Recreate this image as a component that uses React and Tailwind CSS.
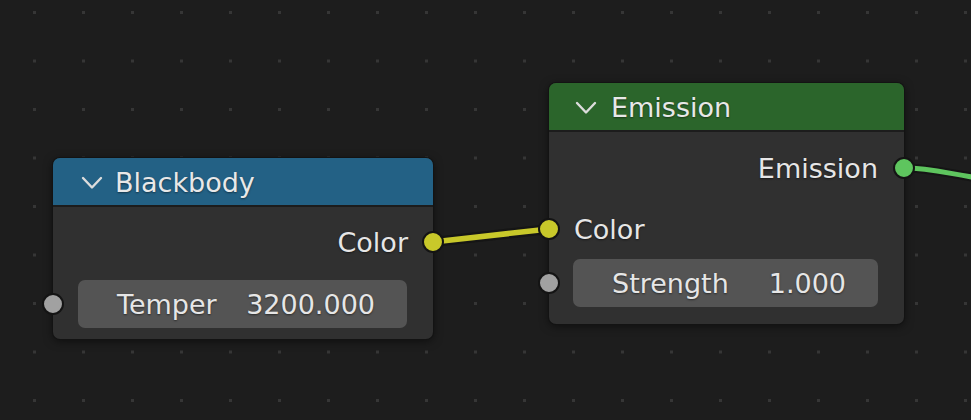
import React from "react";

const font = { fontFamily: '"DejaVu Sans", "Liberation Sans", sans-serif' };

function Chevron() {
  return (
    <svg width="22" height="14" viewBox="0 0 22 14" className="shrink-0">
      <polyline points="2,2 11,11.5 20,2" fill="none" stroke="#dcdcdc" strokeWidth="2.4" strokeLinecap="round" strokeLinejoin="round" />
    </svg>
  );
}

function Socket({ color, side }) {
  const pos = side === "left" ? "left-[-11px]" : "right-[-11px]";
  return (
    <div
      className={`absolute ${pos} top-1/2 -translate-y-1/2 w-[22px] h-[22px] rounded-full border-2 border-[#141414] z-10`}
      style={{ backgroundColor: color }}
    />
  );
}

function Field({ label, value }) {
  return (
    <div className="h-[48px] w-full rounded-[7px] bg-[#545454] flex items-center justify-between pl-[39px] pr-[32px] text-[#e6e6e6] [text-shadow:0_1px_2px_rgba(0,0,0,0.5)]">
      <span>{label}</span>
      <span>{value}</span>
    </div>
  );
}

export default function App() {
  return (
    <div
      className="relative w-[971px] h-[420px] overflow-hidden bg-[#1d1d1d] bg-[radial-gradient(circle,#363636_1.6px,transparent_1.9px)] bg-[length:49px_48.5px] bg-[position:10px_-11.75px] text-[27px] leading-none"
      style={font}
    >
      <svg className="absolute inset-0" width="971" height="420">
        <path d="M433 242 L 549 229" fill="none" stroke="#151515" strokeWidth="10" strokeLinecap="round" />
        <path d="M433 242 L 549 229" fill="none" stroke="#c8c82a" strokeWidth="5.5" strokeLinecap="round" />
        <path d="M904 168 C 935 168, 950 175, 1000 181" fill="none" stroke="#151515" strokeWidth="9" />
        <path d="M904 168 C 935 168, 950 175, 1000 181" fill="none" stroke="#5ec55e" strokeWidth="5" />
      </svg>

      {/* Blackbody node */}
      <div className="absolute left-[53px] top-[158px] w-[380px] h-[181px] rounded-[7px] bg-[#303030] shadow-[0_0_0_1px_#131313,0_2px_10px_rgba(0,0,0,0.55)] flex flex-col">
        <div className="h-[49px] shrink-0 rounded-t-[7px] bg-[#236185] border-b-2 border-[#1c1c1c] flex items-center pt-[2px] pl-[28px] gap-[12px] text-[#e8e8e8] [text-shadow:0_1px_2px_rgba(0,0,0,0.45)]">
          <Chevron />
          <span>Blackbody</span>
        </div>
        <div className="relative mt-[17px] h-[36px] flex items-center justify-end pr-[25px] text-[#e6e6e6] [text-shadow:0_1px_2px_rgba(0,0,0,0.5)]">
          <span>Color</span>
          <Socket color="#c8c82a" side="right" />
        </div>
        <div className="relative mt-[20px] px-[25px] pr-[26px]">
          <Field label="Temper" value="3200.000" />
          <Socket color="#a1a1a1" side="left" />
        </div>
      </div>

      {/* Emission node */}
      <div className="absolute left-[549px] top-[83px] w-[355px] h-[241px] rounded-[7px] bg-[#303030] shadow-[0_0_0_1px_#131313,0_2px_10px_rgba(0,0,0,0.55)] flex flex-col">
        <div className="h-[49px] shrink-0 rounded-t-[7px] bg-[#2b652b] border-b-2 border-[#1c1c1c] flex items-center pt-[2px] pl-[26px] gap-[14px] text-[#e8e8e8] [text-shadow:0_1px_2px_rgba(0,0,0,0.45)]">
          <Chevron />
          <span>Emission</span>
        </div>
        <div className="relative mt-[18px] h-[36px] flex items-center justify-end pr-[26px] text-[#e6e6e6] [text-shadow:0_1px_2px_rgba(0,0,0,0.5)]">
          <span>Emission</span>
          <Socket color="#5ec55e" side="right" />
        </div>
        <div className="relative mt-[25px] h-[36px] flex items-center pl-[25px] text-[#e6e6e6] [text-shadow:0_1px_2px_rgba(0,0,0,0.5)]">
          <span>Color</span>
          <Socket color="#c8c82a" side="left" />
        </div>
        <div className="relative mt-[12px] pl-[24px] pr-[26px]">
          <Field label="Strength" value="1.000" />
          <Socket color="#a1a1a1" side="left" />
        </div>
      </div>
    </div>
  );
}
